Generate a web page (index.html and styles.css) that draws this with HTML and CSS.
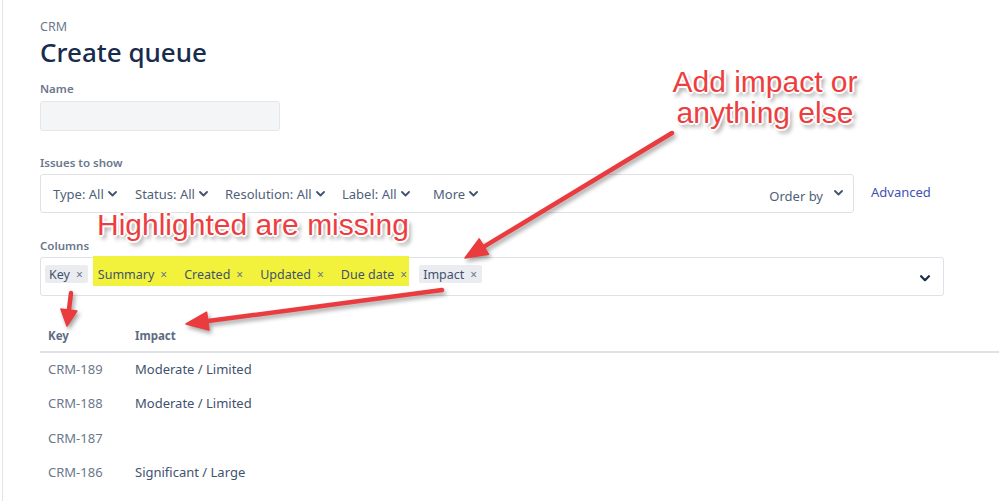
FILE: index.html
```html
<!DOCTYPE html>
<html lang="en">
<head>
<meta charset="utf-8">
<title>Create queue</title>
<link rel="stylesheet" href="styles.css">
</head>
<body>
<div class="page">
  <div class="crumb">CRM</div>
  <h1 class="title">Create queue</h1>

  <div class="label label-name">Name</div>
  <div class="input"></div>

  <div class="label label-issues">Issues to show</div>
  <div class="filter-row">
    <div class="filter-box">
      <span class="fbtn w-type">Type: All <svg class="chev" viewBox="0 0 9 6"><path d="M1 1l3.5 3.5L8 1"/></svg></span>
      <span class="fbtn w-status">Status: All <svg class="chev" viewBox="0 0 9 6"><path d="M1 1l3.5 3.5L8 1"/></svg></span>
      <span class="fbtn w-res">Resolution: All <svg class="chev" viewBox="0 0 9 6"><path d="M1 1l3.5 3.5L8 1"/></svg></span>
      <span class="fbtn w-label">Label: All <svg class="chev" viewBox="0 0 9 6"><path d="M1 1l3.5 3.5L8 1"/></svg></span>
      <span class="fbtn">More <svg class="chev" viewBox="0 0 9 6"><path d="M1 1l3.5 3.5L8 1"/></svg></span>
      <span class="order">Order by <svg class="chev chev-order" viewBox="0 0 9 6"><path d="M1 1l3.5 3.5L8 1"/></svg></span>
    </div>
    <a class="advanced">Advanced</a>
  </div>

  <div class="label label-columns">Columns</div>
  <div class="columns-box">
    <span class="chip">Key <span class="x">×</span></span>
    <span class="hl">
      <span class="chip chip-hl">Summary <span class="x">×</span></span>
      <span class="chip chip-hl">Created <span class="x">×</span></span>
      <span class="chip chip-hl">Updated <span class="x">×</span></span>
      <span class="chip chip-hl">Due date <span class="x">×</span></span>
    </span>
    <span class="chip">Impact <span class="x">×</span></span>
    <svg class="chev chev-big" viewBox="0 0 9 6"><path d="M1 1l3.5 3.5L8 1"/></svg>
  </div>

  <div class="table">
    <div class="thead">
      <div class="c1">Key</div>
      <div class="c2">Impact</div>
    </div>
    <div class="row"><div class="c1 key">CRM-189</div><div class="c2">Moderate / Limited</div></div>
    <div class="row"><div class="c1 key">CRM-188</div><div class="c2">Moderate / Limited</div></div>
    <div class="row"><div class="c1 key">CRM-187</div><div class="c2"></div></div>
    <div class="row"><div class="c1 key">CRM-186</div><div class="c2">Significant / Large</div></div>
  </div>

  <div class="note note-missing">Highlighted are missing</div>
  <div class="note note-add">Add impact or<br>anything else</div>

  <svg class="arrows" viewBox="0 0 999 501" width="999" height="501">
    <g fill="#ea3b3f" stroke="#ea3b3f" stroke-linecap="round" stroke-linejoin="round">
      <line x1="672" y1="133" x2="484" y2="246.6" stroke-width="4.5"/>
      <polygon points="465,258 488.5,254.3 479.2,238.9" stroke-width="1.5"/>
      <line x1="442" y1="290" x2="208" y2="321.1" stroke-width="4.5"/>
      <polygon points="186,324 206.6,312.2 209,330" stroke-width="1.5"/>
      <line x1="71" y1="293" x2="68.9" y2="310.5" stroke-width="4.5"/>
      <polygon points="67,326 60.9,309.1 76.8,311.1" stroke-width="1.5"/>
    </g>
  </svg>
</div>
</body>
</html>
```

FILE: styles.css
```css
html, body {
  margin: 0;
  padding: 0;
  background: #ffffff;
}
body {
  font-family: "Noto Sans", "Open Sans", sans-serif;
  color: #172b4d;
  width: 999px;
  height: 501px;
  overflow: hidden;
}
.page {
  position: relative;
  margin-left: 2px;
  border-left: 1px solid #e3e3e3;
  padding-left: 37px;
  height: 501px;
  box-sizing: border-box;
}
.crumb {
  padding-top: 19px;
  height: 16px;
  line-height: 16px;
  font-size: 12.5px;
  color: #6b778c;
}
.title {
  margin: 0;
  height: 34px;
  line-height: 34px;
  font-size: 26px;
  font-weight: 500;
  color: #172b4d;
}
.label {
  height: 16px;
  line-height: 16px;
  font-size: 11.5px;
  font-weight: 600;
  color: #6b778c;
}
.label-name { margin-top: 12px; }
.input {
  margin-top: 4px;
  width: 240px;
  height: 30px;
  box-sizing: border-box;
  background: #f4f5f7;
  border: 1px solid #e4e6ea;
  border-radius: 3px;
}
.label-issues { margin-top: 24px; }
.filter-row {
  margin-top: 3px;
  display: flex;
  align-items: center;
}
.filter-box {
  width: 814px;
  height: 39px;
  box-sizing: border-box;
  border: 1px solid #dfe1e6;
  border-radius: 3px;
  display: flex;
  align-items: center;
  padding-left: 12px;
  font-size: 13px;
  color: #505f79;
}
.fbtn {
  display: inline-flex;
  align-items: center;
  white-space: nowrap;
}
.w-type { width: 82px; }
.w-status { width: 90px; }
.w-res { width: 117px; }
.w-label { width: 91px; }
.chev {
  width: 9px;
  height: 6px;
  margin-left: 4px;
  fill: none;
  stroke: #42526e;
  stroke-width: 1.8;
  stroke-linecap: round;
  stroke-linejoin: round;
}
.order {
  margin-left: auto;
  margin-right: 10px;
  padding-top: 5px;
  display: inline-flex;
  align-items: center;
}
.chev-order {
  margin-left: 11px;
  margin-top: -6px;
}
.advanced {
  margin-left: 17px;
  margin-top: -3px;
  font-size: 13px;
  color: #3f51b5;
}
.label-columns { margin-top: 25px; }
.columns-box {
  margin-top: 3px;
  width: 904px;
  height: 39px;
  box-sizing: border-box;
  border: 1px solid #dfe1e6;
  border-radius: 3px;
  display: flex;
  align-items: flex-start;
  padding: 7px 0 0 4px;
  font-size: 12.5px;
  color: #42526e;
}
.chip {
  display: inline-flex;
  align-items: center;
  height: 18px;
  padding: 0 5px 0 4px;
  background: #ebecf0;
  border-radius: 2px;
  white-space: nowrap;
}
.chip .x {
  margin-left: 6px;
  font-size: 12px;
  color: #6b778c;
}
.hl {
  display: flex;
  gap: 8px;
  margin: -9px 10px 0 5px;
  padding: 9px 0 3px 1px;
  height: 18px;
  background: #f2f23c;
}
.chip-hl { background: #f2f23c; }
.hl .chip:last-child { padding-right: 2px; }
.chev-big {
  margin-left: auto;
  margin-right: 13px;
  margin-top: 10px;
  width: 10px;
  height: 7px;
  stroke: #172b4d;
  stroke-width: 2;
}
.table {
  margin-top: 21px;
}
.thead {
  display: flex;
  height: 34px;
  line-height: 37px;
  font-size: 11.5px;
  font-weight: 700;
  color: #5e6c84;
  border-bottom: 2px solid #dfe1e6;
}
.row {
  display: flex;
  height: 34.3px;
  line-height: 33px;
  font-size: 13px;
  color: #42526e;
}
.c1 { width: 87px; padding-left: 8px; box-sizing: border-box; }
.c2 { padding-left: 8px; }
.key { color: #6b778c; }
.note {
  position: absolute;
  font-family: "Liberation Sans", Arial, sans-serif;
  font-size: 30px;
  line-height: 31px;
  color: #ee3d40;
  white-space: nowrap;
  text-shadow:
    1px 1px 0 #fff, -1px -1px 0 #fff, 1px -1px 0 #fff, -1px 1px 0 #fff,
    2px 0 0 #fff, -2px 0 0 #fff, 0 2px 0 #fff, 0 -2px 0 #fff,
    3px 4px 4px rgba(0, 0, 0, 0.45);
}
.note-missing {
  left: 94px;
  top: 209px;
}
.note-add {
  left: 660px;
  top: 66px;
  width: 204px;
  text-align: center;
}
.arrows {
  position: absolute;
  left: -3px;
  top: 0;
  pointer-events: none;
  filter: drop-shadow(2px 3px 2px rgba(0, 0, 0, 0.35));
}
```
